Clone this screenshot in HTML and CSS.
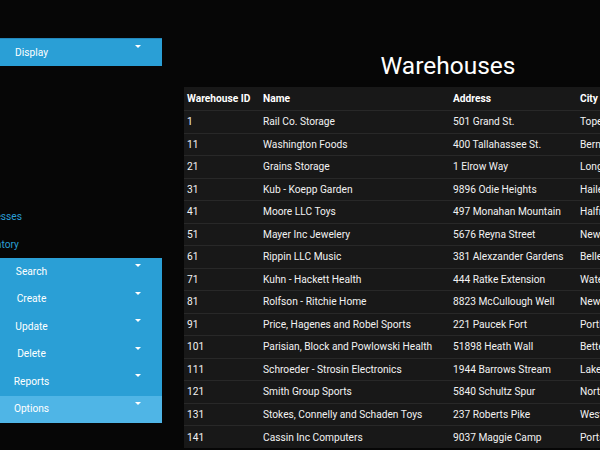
FILE: index.html
```html
<!DOCTYPE html>
<html lang="en">
<head>
<meta charset="utf-8">
<title>Warehouses</title>
<link rel="stylesheet" href="styles.css">
</head>
<body>
<div class="layout">
  <nav class="sidebar">
    <div class="menu-item display-bar"><span class="label">Display</span><span class="caret"></span></div>
    <div class="links">
      <a class="nav-link" href="#">Addresses</a>
      <a class="nav-link" href="#">Inventory</a>
    </div>
    <div class="menu-block">
      <div class="menu-item"><span class="label">Search</span><span class="caret"></span></div>
      <div class="menu-item"><span class="label">Create</span><span class="caret"></span></div>
      <div class="menu-item"><span class="label">Update</span><span class="caret"></span></div>
      <div class="menu-item"><span class="label">Delete</span><span class="caret"></span></div>
      <div class="menu-item"><span class="label">Reports</span><span class="caret"></span></div>
      <div class="menu-item active"><span class="label">Options</span><span class="caret"></span></div>
    </div>
  </nav>
  <main class="main">
    <h1 class="title">Warehouses</h1>
    <table class="grid">
      <colgroup><col class="c1"><col class="c2"><col class="c3"><col class="c4"></colgroup>
      <thead>
        <tr><th>Warehouse ID</th><th>Name</th><th>Address</th><th>City</th></tr>
      </thead>
      <tbody>
        <tr><td>1</td><td>Rail Co. Storage</td><td>501 Grand St.</td><td>Topeka</td></tr>
        <tr><td>11</td><td>Washington Foods</td><td>400 Tallahassee St.</td><td>Bern</td></tr>
        <tr><td>21</td><td>Grains Storage</td><td>1 Elrow Way</td><td>Long Beach</td></tr>
        <tr><td>31</td><td>Kub - Koepp Garden</td><td>9896 Odie Heights</td><td>Haileyside</td></tr>
        <tr><td>41</td><td>Moore LLC Toys</td><td>497 Monahan Mountain</td><td>Halfmoon</td></tr>
        <tr><td>51</td><td>Mayer Inc Jewelery</td><td>5676 Reyna Street</td><td>New Haven</td></tr>
        <tr><td>61</td><td>Rippin LLC Music</td><td>381 Alexzander Gardens</td><td>Belleville</td></tr>
        <tr><td>71</td><td>Kuhn - Hackett Health</td><td>444 Ratke Extension</td><td>Waterford</td></tr>
        <tr><td>81</td><td>Rolfson - Ritchie Home</td><td>8823 McCullough Well</td><td>New Castle</td></tr>
        <tr><td>91</td><td>Price, Hagenes and Robel Sports</td><td>221 Paucek Fort</td><td>Portland</td></tr>
        <tr><td>101</td><td>Parisian, Block and Powlowski Health</td><td>51898 Heath Wall</td><td>Bettendorf</td></tr>
        <tr><td>111</td><td>Schroeder - Strosin Electronics</td><td>1944 Barrows Stream</td><td>Lakewood</td></tr>
        <tr><td>121</td><td>Smith Group Sports</td><td>5840 Schultz Spur</td><td>North Haven</td></tr>
        <tr><td>131</td><td>Stokes, Connelly and Schaden Toys</td><td>237 Roberts Pike</td><td>Westfield</td></tr>
        <tr><td>141</td><td>Cassin Inc Computers</td><td>9037 Maggie Camp</td><td>Portsmouth</td></tr>
      </tbody>
    </table>
  </main>
</div>
</body>
</html>
```

FILE: styles.css
```css
html, body {
  margin: 0;
  padding: 0;
  background: #060606;
  overflow: hidden;
}

body {
  font-family: Roboto, "Liberation Sans", sans-serif;
  font-size: 10.2px;
  color: #fff;
  width: 600px;
  height: 450px;
}

.layout {
  display: flex;
  gap: 22px;
  align-items: flex-start;
}

.sidebar {
  flex: 0 0 162px;
  width: 162px;
  padding-top: 38px;
}

.menu-item {
  display: flex;
  align-items: flex-start;
  height: 27.5px;
  background: #2a9fd6;
  color: #fff;
}

.display-bar {
  height: 27px;
  border-top: 1px solid #2387bb;
}

.menu-item.active {
  background: #4fb5e6;
}

.label {
  width: 63px;
  text-align: center;
  align-self: center;
  line-height: 14px;
}

.caret {
  margin: 6px 21px 0 auto;
  width: 0;
  height: 0;
  border-left: 3px solid transparent;
  border-right: 3px solid transparent;
  border-top: 3px solid #fff;
}

.links {
  margin-top: 137px;
  display: flex;
  flex-direction: column;
}

.nav-link {
  display: block;
  width: 60px;
  margin-left: -32px;
  height: 27.5px;
  line-height: 27.5px;
  text-align: center;
  color: #2a9fd6;
  text-decoration: none;
}

.main {
  flex: 0 0 528px;
  width: 528px;
  padding-top: 52px;
}

.title {
  margin: 0 0 7px;
  height: 28px;
  font-size: 24.5px;
  line-height: 28px;
  font-weight: 400;
  text-align: center;
  color: #fff;
}

.grid {
  width: 528px;
  table-layout: fixed;
  border-collapse: collapse;
  background: #181818;
}

.c1 { width: 76px; }
.c2 { width: 190px; }
.c3 { width: 127px; }
.c4 { width: 135px; }

.grid th,
.grid td {
  padding: 0 3px;
  text-align: left;
  white-space: nowrap;
  overflow: hidden;
  color: #f2f2f2;
}

.grid th {
  height: 23px;
  font-weight: 700;
  color: #fff;
}

.grid td {
  height: 22.5px;
  border-top: 1px solid #282828;
  box-sizing: border-box;
}
```
